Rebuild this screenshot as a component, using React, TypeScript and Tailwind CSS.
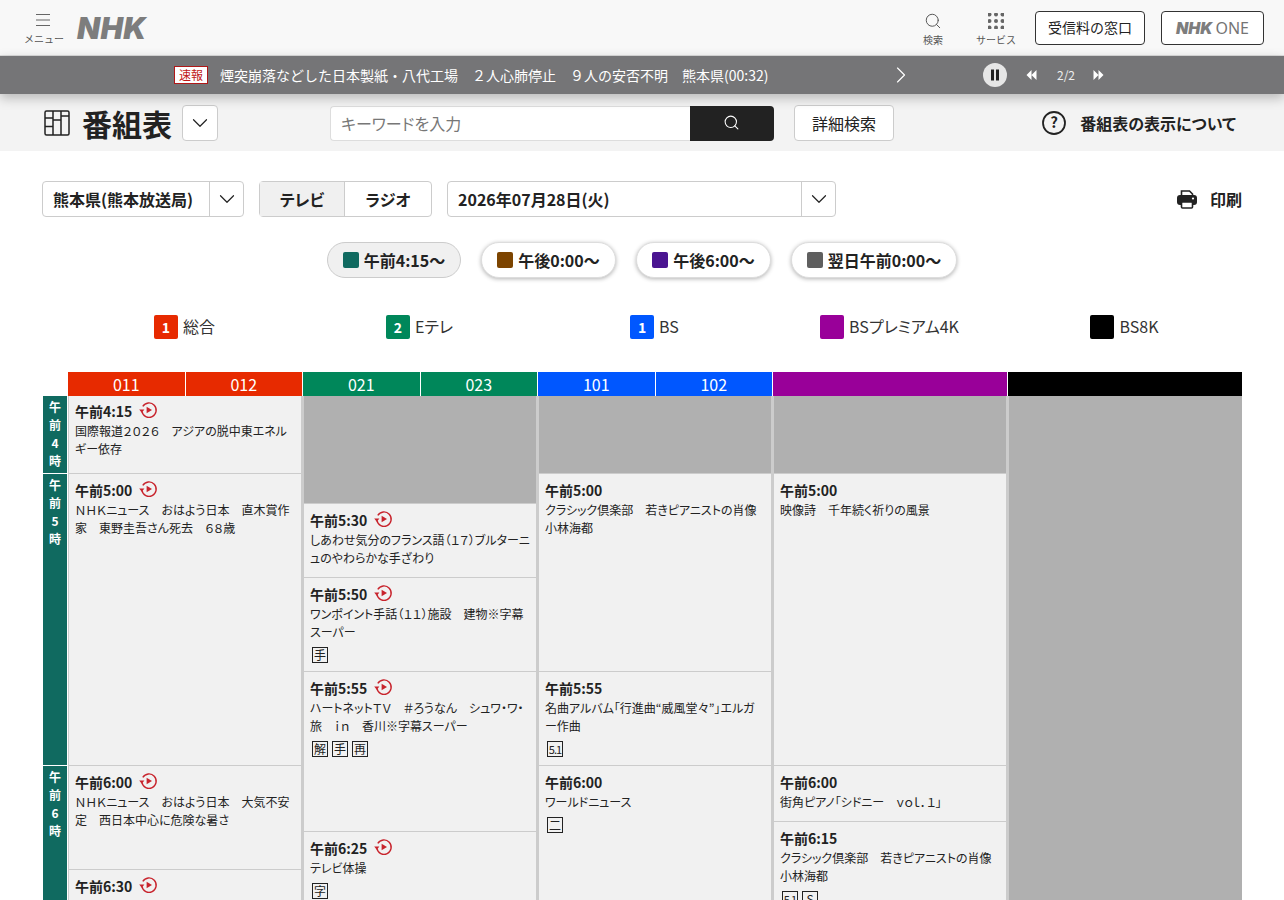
import { ChevronDown, ChevronRight, Search } from 'lucide-react'

type Program = { h: string; time?: string; title?: string; replay?: boolean; marks?: string[]; top?: boolean }

const channels: { color: string; codes: string[]; programs: Program[] }[] = [
  {
    color: 'bg-[#e72a00]',
    codes: ['011', '012'],
    programs: [
      { h: 'h-[77px]', time: '午前4:15', replay: true, top: true, title: '国際報道２０２６　アジアの脱中東エネルギー依存' },
      { h: 'h-[291px]', time: '午前5:00', replay: true, title: 'ＮＨＫニュース　おはよう日本　直木賞作家　東野圭吾さん死去　６８歳' },
      { h: 'h-[103px]', time: '午前6:00', replay: true, title: 'ＮＨＫニュース　おはよう日本　大気不安定　西日本中心に危険な暑さ' },
      { h: 'h-[100px]', time: '午前6:30', replay: true },
    ],
  },
  {
    color: 'bg-[#00875a]',
    codes: ['021', '023'],
    programs: [
      { h: 'h-[107px]' },
      { h: 'h-[73px]', time: '午前5:30', replay: true, title: 'しあわせ気分のフランス語（１７）ブルターニュのやわらかな手ざわり' },
      { h: 'h-[93px]', time: '午前5:50', replay: true, title: 'ワンポイント手話（１１）施設　建物※字幕スーパー', marks: ['手'] },
      { h: 'h-[159px]', time: '午前5:55', replay: true, title: 'ハートネットＴＶ　＃ろうなん　シュワ・ワ・旅　ｉｎ　香川※字幕スーパー', marks: ['解', '手', '再'] },
      { h: 'h-[100px]', time: '午前6:25', replay: true, title: 'テレビ体操', marks: ['字'] },
    ],
  },
  {
    color: 'bg-[#0057ff]',
    codes: ['101', '102'],
    programs: [
      { h: 'h-[77px]' },
      { h: 'h-[197px]', time: '午前5:00', title: 'クラシック倶楽部　若きピアニストの肖像　小林海都' },
      { h: 'h-[93px]', time: '午前5:55', title: '名曲アルバム「行進曲“威風堂々”」エルガー作曲', marks: ['5.1'] },
      { h: 'h-[160px]', time: '午前6:00', title: 'ワールドニュース', marks: ['二'] },
    ],
  },
  {
    color: 'bg-[#990099]',
    codes: [''],
    programs: [
      { h: 'h-[77px]' },
      { h: 'h-[291px]', time: '午前5:00', title: '映像詩　千年続く祈りの風景' },
      { h: 'h-[55px]', time: '午前6:00', title: '街角ピアノ「シドニー　ｖｏｌ．１」' },
      { h: 'h-[100px]', time: '午前6:15', title: 'クラシック倶楽部　若きピアニストの肖像　小林海都', marks: ['5.1', 'S'] },
    ],
  },
  {
    color: 'bg-black',
    codes: [''],
    programs: [{ h: 'h-[504px]' }],
  },
]

const hours = [
  { h: 'h-[77px]', chars: ['午', '前', '4', '時'] },
  { h: 'h-[291px]', chars: ['午', '前', '5', '時'] },
  { h: 'h-[134px]', chars: ['午', '前', '6', '時'] },
]

const pills = [
  { label: '午前4:15〜', color: 'bg-[#106a60]', w: 'w-[134px]', active: true },
  { label: '午後0:00〜', color: 'bg-[#7c4400]', w: 'w-[135px]' },
  { label: '午後6:00〜', color: 'bg-[#4a1591]', w: 'w-[135px]' },
  { label: '翌日午前0:00〜', color: 'bg-[#5f5f5f]', w: 'w-[166px]' },
]

const legend = [
  { num: '1', label: '総合', color: 'bg-[#e72a00]' },
  { num: '2', label: 'Eテレ', color: 'bg-[#00875a]' },
  { num: '1', label: 'BS', color: 'bg-[#0057ff]' },
  { num: '', label: 'BSプレミアム4K', color: 'bg-[#990099]' },
  { num: '', label: 'BS8K', color: 'bg-black' },
]

function ReplayIcon() {
  return (
    <svg width="20" height="18" viewBox="0 0 20 18" fill="none" className="ml-[6px] shrink-0 -translate-y-[1px]">
      <path d="M4.8 5.4A7.2 7.2 0 1 1 3.9 10.4" stroke="#c8232c" strokeWidth="1.4" />
      <path d="M1.2 8.6h5.2L3.8 11.8z" fill="#c8232c" />
      <path d="M8.6 5.8l5.4 3.2-5.4 3.2z" fill="#c8232c" />
    </svg>
  )
}

function Mark({ label }: { label: string }) {
  return (
    <span
      className={`flex h-4 w-4 items-center justify-center border border-[#222] leading-none text-[#222] ${
        label === '5.1' ? 'text-[11px] tracking-[-1px]' : 'text-[12px]'
      }`}
    >
      {label}
    </span>
  )
}

function ProgramCell({ program }: { program: Program }) {
  if (!program.time) return <div className={`${program.h} mb-px bg-[#b0b0b0]`} />
  return (
    <div className={`${program.h} mb-px overflow-hidden bg-[#f1f1f1] pl-[6px] pr-[6px] ${program.top ? 'pt-[5px]' : 'pt-[6px]'}`}>
      <div className="flex h-5 items-center">
        <span className="text-[14px] leading-5 font-bold text-[#222]">{program.time}</span>
        {program.replay && <ReplayIcon />}
      </div>
      {program.title && <p className="mt-[1px] text-[12px] leading-[18px] text-[#222]">{program.title}</p>}
      {program.marks && (
        <div className="mt-[6px] ml-[2px] flex gap-1">
          {program.marks.map((m, i) => (
            <Mark key={i} label={m} />
          ))}
        </div>
      )}
    </div>
  )
}

export default function App() {
  return (
    <div className="h-[900px] overflow-hidden bg-white [font-family:'Noto_Sans_CJK_JP','Noto_Sans',sans-serif] [font-feature-settings:'palt'] text-[#222]">
      {/* Global header */}
      <header className="flex h-[56px] items-center border-b border-[#ddd] bg-[#f8f8f8] pl-[24px] pr-[20px] [font-feature-settings:normal]">
        <div className="flex w-[40px] flex-col items-center pt-[4px]">
          <svg width="14" height="14" viewBox="0 0 14 14" stroke="#666" strokeWidth="1.2" className="-translate-x-[1px]">
            <path d="M0 1.5h14M0 7h14M0 12.5h14" />
          </svg>
          <span className="mt-[5px] text-[10px] leading-[14px] text-[#555]">メニュー</span>
        </div>
        <span className="mt-[1px] ml-[13px] [font-family:'Inter',sans-serif] text-[30px] leading-none font-black tracking-[0.3px] text-[#7d7d7d] italic">
          NHK
        </span>
        <div className="ml-auto flex flex-col items-center pt-[4px]">
          <Search size={18} strokeWidth={1.3} className="text-[#555]" />
          <span className="mt-[3px] text-[10px] leading-[14px] text-[#555]">検索</span>
        </div>
        <div className="ml-[33px] flex flex-col items-center pt-[4px]">
          <svg width="16" height="16" viewBox="0 0 16 16" fill="#666">
            {[1.5, 8, 14.5].flatMap((y) =>
              [1.5, 8, 14.5].map((x) => <circle key={`${x}-${y}`} cx={x} cy={y} r="2" />)
            )}
          </svg>
          <span className="mt-[4px] text-[10px] leading-[14px] text-[#555]">サービス</span>
        </div>
        <div className="ml-[19px] flex h-[34px] w-[110px] items-center justify-center rounded border border-[#333] bg-white text-[14px]">
          受信料の窓口
        </div>
        <div className="ml-[16px] flex h-[34px] w-[103px] items-center justify-center rounded border border-[#333] bg-white">
          <span className="[font-family:'Inter',sans-serif] text-[16px] font-black text-[#7d7d7d] italic">NHK</span>
          <span className="ml-[3px] [font-family:'Noto_Sans',sans-serif] text-[16px] text-[#757575]">ONE</span>
        </div>
      </header>

      {/* Breaking news bar */}
      <div className="relative z-10 flex h-[38px] items-center bg-[#757577] pl-[174px] shadow-[0_4px_12px_rgba(0,0,0,0.25)] [font-feature-settings:normal]">
        <span className="flex h-[18px] w-[34px] items-center justify-center border border-[#b01818] bg-white text-[12px] leading-none text-[#c01818]">
          速報
        </span>
        <span className="ml-3 w-[668px] text-[14px] whitespace-nowrap text-white">
          煙突崩落などした日本製紙・八代工場　２人心肺停止　９人の安否不明　熊本県(00:32)
        </span>
        <ChevronRight size={28} strokeWidth={1} className="-ml-[1px] text-white" />
        <span className="ml-[68px] flex h-6 w-6 items-center justify-center rounded-full bg-[#e6e6e6]">
          <svg width="10" height="12" viewBox="0 0 10 12" fill="#222">
            <rect x="1" y="0.5" width="3" height="11" />
            <rect x="6" y="0.5" width="3" height="11" />
          </svg>
        </span>
        <svg width="11" height="10" viewBox="0 0 11 10" fill="#fff" className="ml-[19px]">
          <path d="M5.5 0v10L0.5 5zM10.5 0v10L5.5 5z" />
        </svg>
        <span className="ml-[20px] text-[12px] text-[#eee]">2/2</span>
        <svg width="11" height="10" viewBox="0 0 11 10" fill="#fff" className="ml-[18px]">
          <path d="M0.5 0v10L5.5 5zM5.5 0v10L10.5 5z" />
        </svg>
      </div>

      {/* Page title bar */}
      <div className="flex h-[57px] items-center bg-[#f3f3f3] pl-[44px] pr-[48px]">
        <svg width="26" height="26" viewBox="0 0 26 26" fill="none" stroke="#222" strokeWidth="1.5">
          <rect x="1" y="1" width="24" height="24" rx="1.5" />
          <path d="M9 1v24M17 1v24M1 8h8M1 16.5h8M9 10h8M17 6h8" />
        </svg>
        <h1 className="ml-[12px] text-[30px] leading-none font-bold">番組表</h1>
        <div className="ml-[10px] flex h-9 w-9 items-center justify-center rounded border border-[#ccc] bg-white">
          <ChevronDown size={26} strokeWidth={1.1} />
        </div>
        <div className="mt-[2px] ml-[112px] flex h-[35px] w-[360px] items-center rounded-l border border-r-0 border-[#ddd] bg-white pb-[2px] pl-[10px] text-[16px] text-[#777]">
          キーワードを入力
        </div>
        <div className="mt-[2px] flex h-[35px] w-[84px] items-center justify-center rounded-r bg-[#222]">
          <Search size={17} strokeWidth={1.5} className="-translate-x-[1px] -translate-y-[1px] text-white" />
        </div>
        <div className="ml-[20px] flex h-[36px] w-[100px] items-center justify-center rounded border border-[#ccc] bg-white text-[16px]">
          詳細検索
        </div>
        <svg width="24" height="24" viewBox="0 0 24 24" fill="none" className="ml-auto">
          <circle cx="12" cy="12" r="11" stroke="#222" strokeWidth="1.8" />
          <text x="12" y="17" textAnchor="middle" fontSize="15" fontWeight="700" fill="#222">?</text>
        </svg>
        <span className="ml-[14px] text-[16px] font-bold">番組表の表示について</span>
      </div>

      <main className="px-[42px] pt-[30px]">
        {/* Filters */}
        <div className="flex h-9 items-center">
          <div className="flex h-9 w-[202px] items-center rounded border border-[#ccc]">
            <span className="flex-1 pl-[10px] text-[16px] font-bold">熊本県(熊本放送局)</span>
            <span className="flex h-full w-[34px] items-center justify-center border-l border-[#ccc]">
              <ChevronDown size={26} strokeWidth={1.1} />
            </span>
          </div>
          <div className="ml-[15px] flex h-9 w-[173px] rounded border border-[#ccc] text-[16px] font-bold">
            <span className="flex w-[85px] items-center justify-center border-r border-[#ccc] bg-[#f0f0f0]">テレビ</span>
            <span className="flex flex-1 items-center justify-center">ラジオ</span>
          </div>
          <div className="ml-[15px] flex h-9 w-[389px] items-center rounded border border-[#ccc]">
            <span className="flex-1 pl-[10px] text-[16px] font-bold">2026年07月28日(火)</span>
            <span className="flex h-full w-[34px] items-center justify-center border-l border-[#ccc]">
              <ChevronDown size={26} strokeWidth={1.1} />
            </span>
          </div>
          <svg width="20" height="20" viewBox="0 0 20 20" className="ml-auto">
            <path d="M4.5 7V2h8l3 3v2" fill="#fff" stroke="#222" strokeWidth="1.6" />
            <rect x="0" y="6" width="20" height="10" rx="3" fill="#222" />
            <rect x="4.5" y="13" width="11" height="6" rx="1" fill="#fff" stroke="#222" strokeWidth="1.6" />
            <circle cx="16" cy="9.5" r="1.1" fill="#fff" />
          </svg>
          <span className="ml-[13px] text-[16px] font-bold">印刷</span>
        </div>

        {/* Time jump */}
        <div className="mt-[25px] flex justify-center gap-[20px]">
          {pills.map((p) => (
            <div
              key={p.label}
              className={`flex h-9 items-center justify-center rounded-full border ${p.w} ${
                p.active
                  ? 'border-[#ccc] bg-[#f0f0f0]'
                  : 'border-[#ddd] bg-white shadow-[0_1px_4px_rgba(0,0,0,0.3)]'
              }`}
            >
              <span className={`h-4 w-4 rounded-[2px] ${p.color}`} />
              <span className="ml-[5px] text-[16px] font-bold">{p.label}</span>
            </div>
          ))}
        </div>

        {/* Channel legend */}
        <div className="mt-[37px] ml-[25px] flex">
          {legend.map((l) => (
            <div key={l.label} className="flex h-6 flex-1 items-center justify-center">
              <span className={`flex h-6 w-6 items-center justify-center rounded-[2px] text-[14px] font-bold text-white ${l.color}`}>
                {l.num}
              </span>
              <span className="-mt-[2px] ml-[5px] text-[16px] text-[#333]">{l.label}</span>
            </div>
          ))}
        </div>

        {/* Schedule grid */}
        <div className="mt-[33px] ml-[1px] flex w-[1199px] overflow-hidden">
          <div className="w-[25px] shrink-0 pt-[24px]">
            {hours.map((hour, i) => (
              <div key={i} className={`${hour.h} mb-px flex w-[24px] flex-col items-center bg-[#106a60] pt-[2px] text-[12px] leading-[18px] font-bold text-white`}>
                {hour.chars.map((c, j) => (
                  <span key={j}>{c}</span>
                ))}
              </div>
            ))}
          </div>
          {channels.map((channel, i) => (
            <div key={i} className="w-[235px] shrink-0">
              <div className={`flex h-6 w-[234px] text-[16px] text-white ${channel.color}`}>
                {channel.codes.map((code, j) => (
                  <span key={j} className={`flex flex-1 items-center justify-center ${j > 0 ? 'border-l border-white' : ''}`}>
                    {code}
                  </span>
                ))}
              </div>
              <div className={`bg-[#ccc] pl-px ${i === channels.length - 1 ? 'pr-0' : 'pr-[2px]'}`}>
                {channel.programs.map((p, j) => (
                  <ProgramCell key={j} program={p} />
                ))}
              </div>
            </div>
          ))}
        </div>
      </main>
    </div>
  )
}
